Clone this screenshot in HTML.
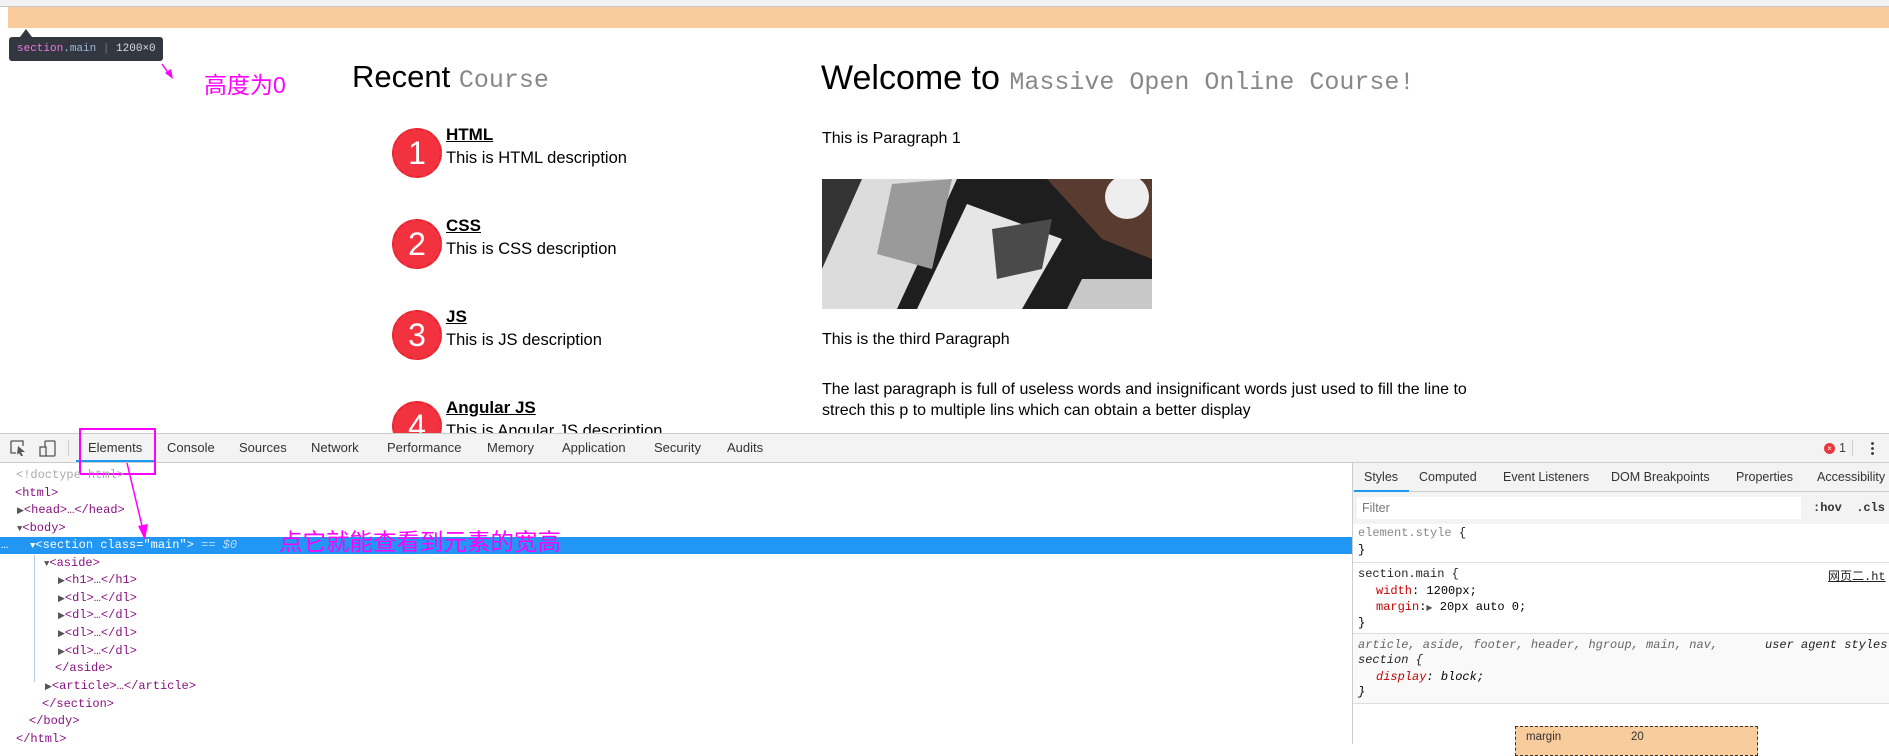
<!DOCTYPE html>
<html><head><meta charset="utf-8"><style>
*{margin:0;padding:0;box-sizing:border-box}
body{width:1889px;height:744px;position:relative;overflow:hidden;background:#fff;font-family:"Liberation Sans","Noto Sans CJK SC",sans-serif;color:#000}
.a{position:absolute;white-space:nowrap}
.m{font-family:"Liberation Mono",monospace}
.circ{position:absolute;width:50px;height:50px;border-radius:50%;background:#f2333f;border:2px dashed #e8242f;color:#fff;font-size:32px;text-align:center;line-height:46px}
.t{font-size:17px;font-weight:bold;text-decoration:underline}
.d{font-size:16.5px}
.p{font-size:16px}
.tab{position:absolute;top:440px;font-size:13px;color:#333}
.dom{position:absolute;font-family:"Liberation Mono",monospace;font-size:12px;color:#881280;height:17px;line-height:17px;white-space:nowrap}
.tri{color:#555;font-size:9px}
.st{position:absolute;top:470px;font-size:12.5px;color:#333}
.css{position:absolute;font-family:"Liberation Mono",monospace;font-size:12px;white-space:nowrap}
</style></head><body>
<div class="a" style="left:0;top:0;width:1889px;height:7px;background:#f2f2f2;border-bottom:1px solid #c8c8c8"></div>
<div class="a" style="left:8px;top:7px;width:1881px;height:21px;background:#f8cc9c"></div>
<div class="a" style="left:20px;top:29px;width:0;height:0;border-left:6px solid transparent;border-right:6px solid transparent;border-bottom:8px solid #333740"></div>
<div class="a m" style="left:9px;top:37px;width:154px;height:24px;background:#333740;border-radius:3px;font-size:11px;line-height:24px;padding-left:8px"><span style="color:#ee78e6">section</span><span style="color:#9bbbdc">.main</span><span style="color:#777"> | </span><span style="color:#ddd">1200×0</span></div>
<svg class="a" style="left:160px;top:63px" width="16" height="18"><path d="M2 1 L9 11" stroke="#f0f" stroke-width="1.5"/><path d="M5 10 L13 16 L11 6 Z" fill="#f0f"/></svg>
<div class="a" style="left:204px;top:66px;font-size:23px;color:#f0f">高度为0</div>
<div class="a" style="left:352px;top:59px;font-size:31px">Recent <span class="m" style="color:#888;font-size:25px">Course</span></div>
<div class="circ" style="left:392px;top:128px">1</div>
<div class="a t" style="left:446px;top:125px">HTML</div>
<div class="a d" style="left:446px;top:149px">This is HTML description</div>
<div class="circ" style="left:392px;top:219px">2</div>
<div class="a t" style="left:446px;top:216px">CSS</div>
<div class="a d" style="left:446px;top:240px">This is CSS description</div>
<div class="circ" style="left:392px;top:310px">3</div>
<div class="a t" style="left:446px;top:307px">JS</div>
<div class="a d" style="left:446px;top:331px">This is JS description</div>
<div class="circ" style="left:392px;top:401px">4</div>
<div class="a t" style="left:446px;top:398px">Angular JS</div>
<div class="a d" style="left:446px;top:422px">This is Angular JS description</div>
<div class="a" style="left:821px;top:59px;font-size:34px">Welcome to <span class="m" style="color:#888;font-size:25px">Massive Open Online Course!</span></div>
<div class="a p" style="left:822px;top:130px">This is Paragraph 1</div>
<svg class="a" style="left:822px;top:179px" width="330" height="130">
<rect width="330" height="130" fill="#1e1e1e"/>
<polygon points="0,0 40,0 0,100" fill="#333"/>
<polygon points="40,0 135,0 75,130 0,130 0,90" fill="#dcdcdc"/>
<polygon points="70,5 130,0 110,90 55,75" fill="#9a9a9a"/>
<polygon points="145,25 240,60 200,130 95,130" fill="#e6e6e6"/>
<polygon points="170,50 230,40 220,90 175,100" fill="#4a4a4a"/>
<polygon points="260,100 330,100 330,130 245,130" fill="#c8c8c8"/>
<polygon points="225,0 330,0 330,80 280,60" fill="#5a3b30"/>
<circle cx="305" cy="18" r="22" fill="#eee"/>
</svg>
<div class="a p" style="left:822px;top:331px">This is the third Paragraph</div>
<div class="a p" style="left:822px;top:381px">The last paragraph is full of useless words and insignificant words just used to fill the line to</div>
<div class="a p" style="left:822px;top:402px">strech this p to multiple lins which can obtain a better display</div>

<!-- devtools -->
<div class="a" style="left:0;top:433px;width:1889px;height:311px;background:#fff"></div>
<div class="a" style="left:0;top:433px;width:1889px;height:30px;background:#f3f3f3;border-top:1px solid #ccc;border-bottom:1px solid #ccc"></div>
<svg class="a" style="left:9px;top:439px" width="50" height="18"><path d="M2 2 H14 V7 M2 2 V14 H7" fill="none" stroke="#555" stroke-width="1.3"/><path d="M9 7 L16 13 L12 13 L14 17 L12 17 L10 14 L8 16 Z" fill="#555"/><rect x="36" y="2" width="10" height="15" rx="1" fill="none" stroke="#555" stroke-width="1.3"/><rect x="31" y="8" width="6" height="9" fill="#f3f3f3" stroke="#555" stroke-width="1.3"/></svg>
<div class="a" style="left:68px;top:440px;width:1px;height:16px;background:#ccc"></div>
<div class="a" style="left:76px;top:460px;width:78px;height:2px;background:#1a9bf0"></div>
<div class="tab" style="left:88px">Elements</div>
<div class="tab" style="left:167px">Console</div>
<div class="tab" style="left:239px">Sources</div>
<div class="tab" style="left:311px">Network</div>
<div class="tab" style="left:387px">Performance</div>
<div class="tab" style="left:487px">Memory</div>
<div class="tab" style="left:562px">Application</div>
<div class="tab" style="left:654px">Security</div>
<div class="tab" style="left:727px">Audits</div>
<div class="a" style="left:1824px;top:443px;width:11px;height:11px;border-radius:50%;background:#e8383d;color:#fff;font-size:8px;text-align:center;line-height:11px">×</div>
<div class="a" style="left:1839px;top:441px;font-size:12.5px;color:#444">1</div>
<div class="a" style="left:1852px;top:440px;width:1px;height:16px;background:#ccc"></div>
<div class="a" style="left:1871px;top:441px;width:3px;height:14px;background:radial-gradient(circle,#444 1.3px,transparent 1.6px) 0 0/3px 5px"></div>
<div class="a" style="left:79px;top:428px;width:77px;height:47px;border:2px solid #f0f"></div>

<div class="dom" style="top:467px;left:16px;color:#aaa">&lt;!doctype html&gt;</div>
<div class="dom" style="top:485px;left:15px">&lt;html&gt;</div>
<div class="dom" style="top:502px;left:17px"><span class="tri">▶</span>&lt;head&gt;…&lt;/head&gt;</div>
<div class="dom" style="top:520px;left:17px"><span class="tri">▼</span>&lt;body&gt;</div>
<div class="a" style="left:0;top:537px;width:1352px;height:17px;background:#2196f3"></div>
<div class="dom" style="top:537px;left:1px;color:#fff">…</div>
<div class="dom" style="top:537px;left:30px;color:#fff"><span style="font-size:9px">▼</span>&lt;section class="main"&gt; <span style="color:#bbdcff">== <i>$0</i></span></div>
<div class="a" style="left:34px;top:555px;width:1px;height:127px;background:#bcd"></div>
<div class="dom" style="top:555px;left:44px"><span class="tri">▼</span>&lt;aside&gt;</div>
<div class="dom" style="top:572px;left:58px"><span class="tri">▶</span>&lt;h1&gt;…&lt;/h1&gt;</div>
<div class="dom" style="top:590px;left:58px"><span class="tri">▶</span>&lt;dl&gt;…&lt;/dl&gt;</div>
<div class="dom" style="top:607px;left:58px"><span class="tri">▶</span>&lt;dl&gt;…&lt;/dl&gt;</div>
<div class="dom" style="top:625px;left:58px"><span class="tri">▶</span>&lt;dl&gt;…&lt;/dl&gt;</div>
<div class="dom" style="top:643px;left:58px"><span class="tri">▶</span>&lt;dl&gt;…&lt;/dl&gt;</div>
<div class="dom" style="top:660px;left:55px">&lt;/aside&gt;</div>
<div class="dom" style="top:678px;left:45px"><span class="tri">▶</span>&lt;article&gt;…&lt;/article&gt;</div>
<div class="dom" style="top:696px;left:42px">&lt;/section&gt;</div>
<div class="dom" style="top:713px;left:29px">&lt;/body&gt;</div>
<div class="dom" style="top:731px;left:16px">&lt;/html&gt;</div>
<svg class="a" style="left:122px;top:462px" width="30" height="80"><path d="M5 1 L21 68" stroke="#f0f" stroke-width="1.5"/><path d="M16 64 L23 78 L26 62 Z" fill="#f0f"/></svg>
<div class="a" style="left:279px;top:523px;font-size:23.5px;color:#f0f">点它就能查看到元素的宽高</div>

<!-- styles pane -->
<div class="a" style="left:1352px;top:463px;width:537px;height:281px;background:#fff;border-left:1px solid #ccc"></div>
<div class="a" style="left:1353px;top:463px;width:536px;height:29px;background:#f3f3f3;border-bottom:1px solid #ccc"></div>
<div class="a" style="left:1354px;top:490px;width:55px;height:2px;background:#1a9bf0"></div>
<div class="st" style="left:1364px">Styles</div>
<div class="st" style="left:1419px">Computed</div>
<div class="st" style="left:1503px">Event Listeners</div>
<div class="st" style="left:1611px">DOM Breakpoints</div>
<div class="st" style="left:1736px">Properties</div>
<div class="st" style="left:1817px">Accessibility</div>
<div class="a" style="left:1353px;top:492px;width:536px;height:32px;background:#f3f3f3"></div>
<div class="a" style="left:1357px;top:497px;width:444px;height:22px;background:#fff;font-size:12.5px;color:#777;padding:4px 5px">Filter</div>
<div class="css" style="left:1813px;top:501px;color:#333;font-weight:bold">:hov&nbsp;&nbsp;.cls</div>
<div class="css" style="left:1358px;top:526px;color:#888">element.style <span style="color:#222">{</span></div>
<div class="css" style="left:1358px;top:543px">}</div>
<div class="a" style="left:1353px;top:562px;width:536px;height:1px;background:#ddd"></div>
<div class="css" style="left:1358px;top:567px;color:#222">section.main {</div>
<div class="css" style="left:1828px;top:567px;color:#222;text-decoration:underline;font-family:'Liberation Mono','Noto Sans CJK SC',monospace">网页二.ht</div>
<div class="css" style="left:1376px;top:584px"><span style="color:#c80000">width</span>: 1200px;</div>
<div class="css" style="left:1376px;top:600px"><span style="color:#c80000">margin</span>:<span style="font-size:8px;color:#555">▶</span> 20px auto 0;</div>
<div class="css" style="left:1358px;top:616px">}</div>
<div class="a" style="left:1353px;top:633px;width:536px;height:71px;background:#f9f9f9;border-top:1px solid #ddd;border-bottom:1px solid #ddd"></div>
<div class="css" style="left:1358px;top:638px;color:#666;font-style:italic">article, aside, footer, header, hgroup, main, nav,</div>
<div class="css" style="left:1765px;top:638px;color:#222;font-style:italic">user agent styles</div>
<div class="css" style="left:1358px;top:653px;color:#222;font-style:italic">section {</div>
<div class="css" style="left:1376px;top:670px;font-style:italic"><span style="color:#c80000">display</span>: block;</div>
<div class="css" style="left:1358px;top:685px;font-style:italic">}</div>
<div class="a" style="left:1515px;top:726px;width:243px;height:30px;background:#f9cc9d;border:1px dashed #333;font-size:11.5px;color:#333;padding:4px 10px">margin<span style="position:absolute;left:115px">20</span></div>
</body></html>
